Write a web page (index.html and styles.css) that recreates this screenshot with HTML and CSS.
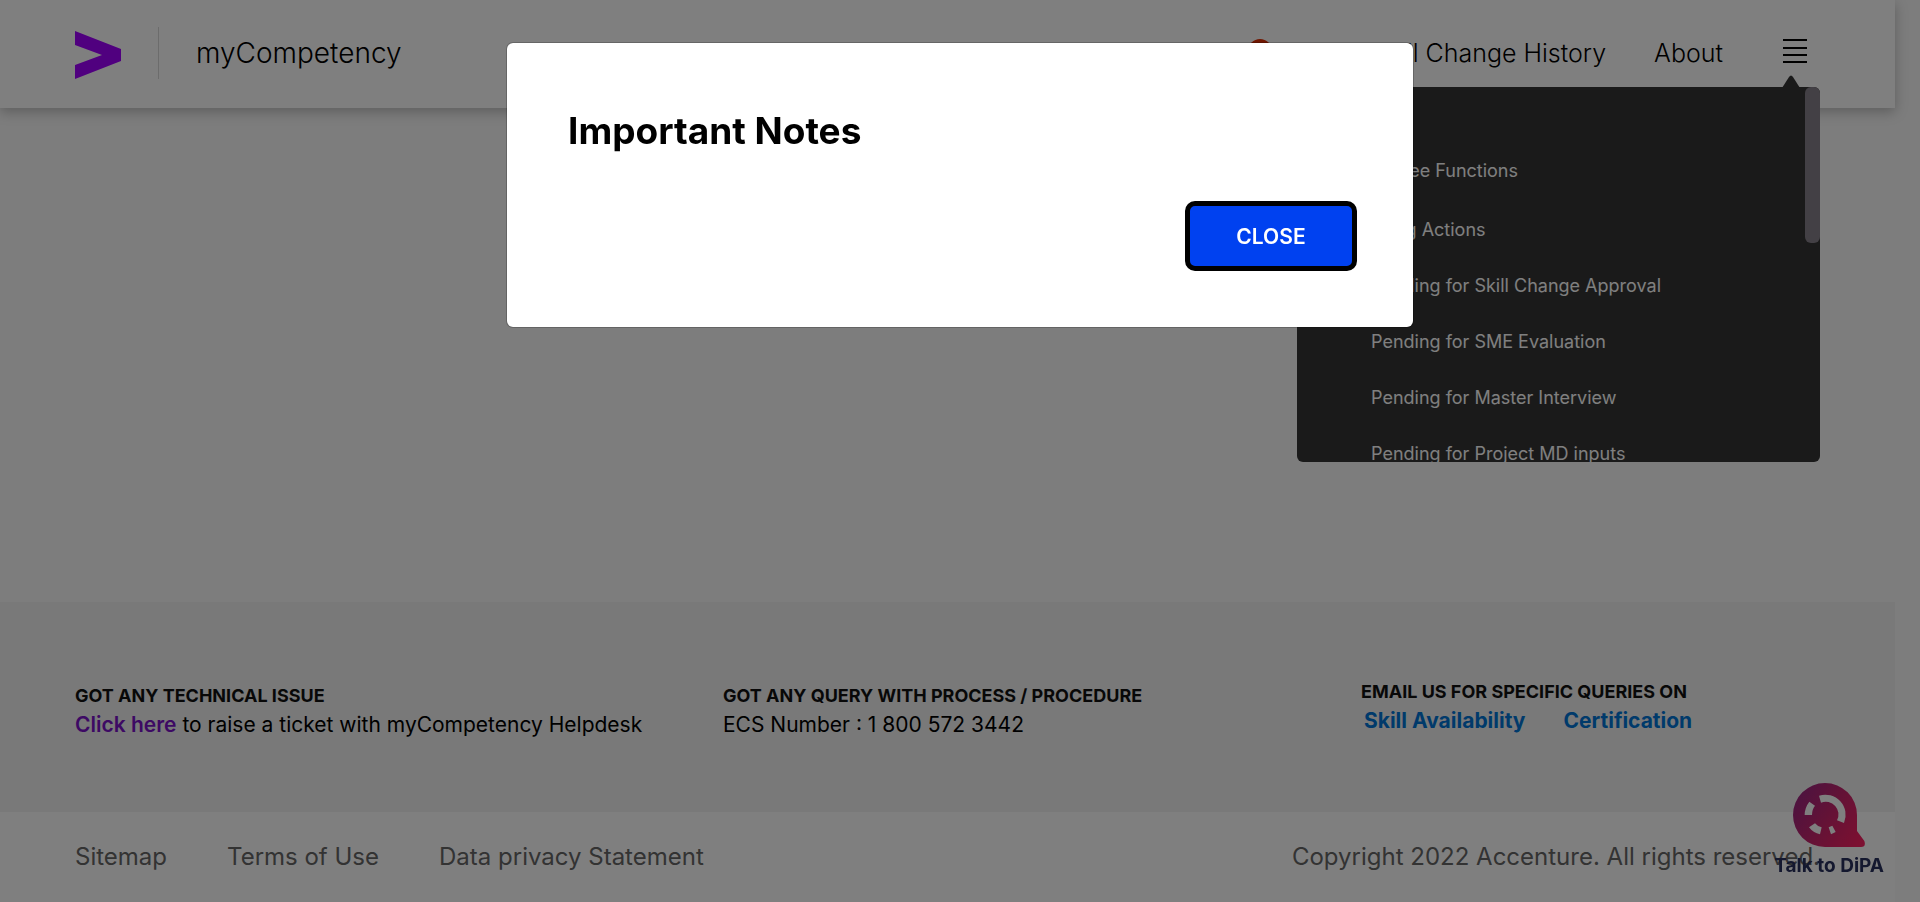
FILE: index.html
```html
<!DOCTYPE html>
<html lang="en">
<head>
<meta charset="utf-8">
<meta name="viewport" content="width=device-width, initial-scale=1">
<title>myCompetency</title>
<link rel="stylesheet" href="styles.css">
</head>
<body>
<div class="page">
  <header class="header">
    <a class="logo" href="#" aria-label="Home">
      <svg width="46" height="48" viewBox="0 0 46 48" aria-hidden="true"><path fill="#a100ff" d="M0 0 46 18V30L0 48V34L27 24 0 14Z"/></svg>
    </a>
    <a class="brand" href="#">myCompetency</a>
    <nav class="nav" aria-label="Main">
      <a class="alerts" href="#" aria-label="Notifications"><span class="badge"></span></a>
      <a href="#">Skill Change History</a>
      <a href="#">About</a>
      <div class="menu">
        <button class="menu-button" type="button" aria-label="Menu" aria-expanded="true">
          <svg width="24" height="25" viewBox="0 0 24 25" aria-hidden="true"><path fill="#000" d="M0 0h24v2H0zM0 8h24v2H0zM0 15h24v2H0zM0 22h24v2H0z"/></svg>
        </button>
        <div class="dropdown">
          <svg class="caret" width="18" height="13" viewBox="0 0 18 13" aria-hidden="true"><path fill="#343434" d="M0 13 7 2Q9-1 11 2L18 13Z"/></svg>
          <div class="dropdown-list">
            <a class="group first" href="#">Employee Functions</a>
            <a class="group" href="#">Pending Actions</a>
            <a href="#">Pending for Skill Change Approval</a>
            <a href="#">Pending for SME Evaluation</a>
            <a href="#">Pending for Master Interview</a>
            <a href="#">Pending for Project MD inputs</a>
          </div>
          <span class="thumb"></span>
        </div>
      </div>
    </nav>
  </header>
  <main class="content"></main>
  <footer class="footer">
    <div class="help">
      <section class="issue">
        <h2>GOT ANY TECHNICAL ISSUE</h2>
        <p><a class="ticket" href="#">Click here</a> to raise a ticket with myCompetency Helpdesk</p>
      </section>
      <section class="query">
        <h2>GOT ANY QUERY WITH PROCESS / PROCEDURE</h2>
        <p>ECS Number : 1 800 572 3442</p>
      </section>
      <section class="email">
        <h2>EMAIL US FOR SPECIFIC QUERIES ON</h2>
        <p class="mail-links"><a href="#">Skill Availability</a><a href="#">Certification</a></p>
      </section>
    </div>
    <div class="legal">
      <a href="#">Sitemap</a>
      <a href="#">Terms of Use</a>
      <a href="#">Data privacy Statement</a>
      <span class="copyright">Copyright 2022 Accenture. All rights reserved.</span>
    </div>
  </footer>
</div>
<button class="chat" type="button">
  <svg width="72" height="64" viewBox="0 0 216 192" aria-hidden="true">
    <defs><linearGradient id="chat-fill" x1="0" y1="0.2" x2="1" y2="0.8"><stop offset="0" stop-color="#982681"/><stop offset="0.5" stop-color="#c8256c"/><stop offset="1" stop-color="#f82062"/></linearGradient></defs>
    <path fill="url(#chat-fill)" d="M96 0a96 96 0 0 1 96 96v48l22 30q6 18-10 18H96A96 96 0 0 1 96 0Z"/>
    <path fill="#fff" d="M78 38A61 61 0 0 1 153 120L132 112A38 38 0 0 0 84 59ZM35 96Q35 74 49 56L66 68Q57 79 57 96ZM66 121 48 133Q61 150 81 154L86 133Q73 130 66 121ZM107 133 118 128 128 147 114 154Z"/>
  </svg>
  <span>Talk to DiPA</span>
</button>
<div class="backdrop">
  <div class="modal" role="dialog" aria-modal="true" aria-labelledby="notes-title">
    <h1 id="notes-title">Important Notes</h1>
    <button class="close" type="button">CLOSE</button>
  </div>
</div>
</body>
</html>
```
FILE: styles.css
```css
* { box-sizing: border-box; }
body {
  margin: 0;
  background: #fafafa;
  color: #000;
  font: 400 21px/28px Inter, "Liberation Sans", sans-serif;
}
a { color: inherit; text-decoration: none; }
button { font-family: inherit; cursor: pointer; }
h1, h2, p { margin: 0; }

.page {
  display: flex;
  flex-direction: column;
  min-height: 100vh;
  margin-right: 25px;
}

.header {
  display: flex;
  align-items: center;
  height: 108px;
  padding: 0 88px 2px 75px;
  background: #fff;
  box-shadow: 0 4px 12px rgba(0, 0, 0, 0.25);
  font-weight: 300;
}
.logo {
  display: flex;
  align-items: flex-end;
  height: 52px;
  padding-right: 37px;
  border-right: 1px solid #d8d8d8;
}
.brand { margin-left: 37px; font-size: 28px; }
.nav {
  display: flex;
  align-items: center;
  gap: 48px;
  margin-left: auto;
  font-size: 25px;
}
.alerts { position: relative; width: 24px; height: 28px; margin-right: 52px; }
.badge {
  position: absolute;
  top: 0;
  right: 0;
  width: 24px;
  height: 24px;
  border-radius: 50%;
  background: #e02c00;
}
.menu { position: relative; margin-left: 12px; padding-bottom: 4px; }
.menu-button {
  display: flex;
  padding: 0;
  border: 0;
  background: none;
}

.dropdown {
  position: absolute;
  top: 48px;
  right: -13px;
  z-index: 2;
  width: 523px;
}
.caret { position: absolute; top: -12px; right: 20px; }
.dropdown-list {
  display: flex;
  flex-direction: column;
  gap: 28px;
  height: 375px;
  padding: 70px 74px 0;
  overflow: hidden;
  border-radius: 6px;
  background: #343434;
  color: #fff;
  font-size: 18px;
  font-weight: 400;
}
.dropdown-list a { flex: none; }
.dropdown-list .group { margin-left: -24px; }
.dropdown-list .first { margin-bottom: 3px; }
.thumb {
  position: absolute;
  top: 0;
  right: 0;
  width: 15px;
  height: 156px;
  border-radius: 6px;
  background: #86808a;
}

.content { flex: 1; }

.help {
  display: flex;
  align-items: center;
  min-height: 210px;
  padding: 8px 75px 0;
  background: #f2f2f2;
}
.help h2 { font-size: 18px; line-height: 28px; font-weight: 700; color: #111; }
.help p { line-height: 30px; }
.issue { flex: 0 0 648px; }
.query { flex: 0 0 638px; }
.email { padding-bottom: 8px; }
.ticket { color: #7b12c8; font-weight: 600; }
.mail-links {
  display: flex;
  gap: 38px;
  padding-left: 3px;
  color: #0075d6;
  font-weight: 700;
}

.legal {
  display: flex;
  align-items: center;
  gap: 60px;
  min-height: 90px;
  padding: 0 75px;
  background: #fff;
  color: #666;
  font-size: 24px;
}
.copyright { margin-left: auto; }

.chat {
  position: fixed;
  right: 36px;
  bottom: 23px;
  display: flex;
  flex-direction: column;
  align-items: center;
  padding: 0;
  border: 0;
  background: none;
  color: #28305f;
  font-size: 19px;
  line-height: 26px;
  font-weight: 700;
}
.chat svg { margin-bottom: 6px; }

.backdrop {
  position: fixed;
  inset: 0;
  z-index: 10;
  padding-top: 42px;
  background: rgba(0, 0, 0, 0.5);
}
.modal {
  display: flex;
  flex-direction: column;
  width: 908px;
  max-width: 90%;
  margin: 0 auto;
  padding: 64px 56px 56px 61px;
  border: 1px solid rgba(0, 0, 0, 0.2);
  border-radius: 7px;
  background: #fff;
  background-clip: padding-box;
}
.modal h1 { font-size: 37px; line-height: 48px; font-weight: 700; }
.close {
  align-self: flex-end;
  margin-top: 46px;
  width: 172px;
  height: 70px;
  border: 5px solid #000;
  border-radius: 10px;
  background: #0041f0;
  color: #fff;
  font-size: 21px;
  font-weight: 600;
}
```
